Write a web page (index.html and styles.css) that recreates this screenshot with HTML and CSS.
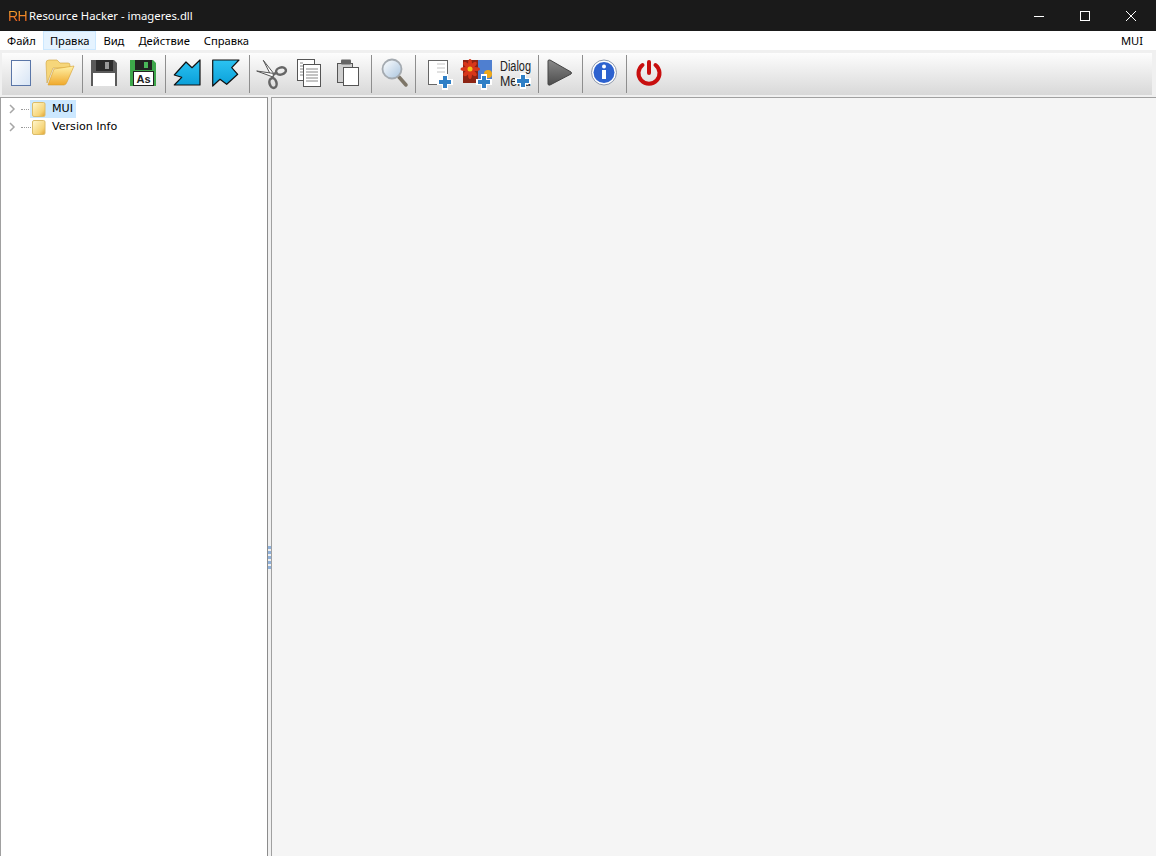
FILE: index.html
```html
<!DOCTYPE html>
<html lang="en">
<head>
    <meta charset="UTF-8">
    <meta name="viewport" content="width=device-width, initial-scale=1.0">
    <title>Resource Hacker - imageres.dll</title>
    <link rel="stylesheet" href="styles.css">
</head>
<body>
    <svg class="defs" width="0" height="0">
        <defs>
            <linearGradient id="paper" x1="0" y1="0" x2="1" y2="1"><stop offset="0" stop-color="#ffffff"/><stop offset="1" stop-color="#d6e4f5"/></linearGradient>
            <linearGradient id="folder" x1="0" y1="0" x2="0" y2="1"><stop offset="0" stop-color="#fff2a8"/><stop offset="1" stop-color="#f0a92c"/></linearGradient>
            <linearGradient id="cyan" x1="0" y1="0" x2="0" y2="1"><stop offset="0" stop-color="#2cc3f2"/><stop offset="1" stop-color="#0a9fd8"/></linearGradient>
            <linearGradient id="play" x1="0" y1="0" x2="0" y2="1"><stop offset="0" stop-color="#8a8a8a"/><stop offset="1" stop-color="#4c4c4c"/></linearGradient>
            <linearGradient id="lens" x1="0" y1="0" x2="1" y2="1"><stop offset="0" stop-color="#ffffff"/><stop offset="1" stop-color="#a9c4de"/></linearGradient>
            <linearGradient id="treefolder" x1="0" y1="0" x2="1" y2="1"><stop offset="0" stop-color="#fff8d0"/><stop offset=".7" stop-color="#f6d476"/><stop offset="1" stop-color="#e0a030"/></linearGradient>
            <g id="plus">
                <path d="M5 0h6v5h5v6h-5v5H5v-5H0V5h5z" fill="#fff"/>
                <path d="M6 2h4v4h4v4h-4v4H6v-4H2V6h4z" fill="#2f7fc6"/>
            </g>
        </defs>
    </svg>

    <header class="titlebar">
        <span class="app-logo">RH</span>
        <span class="app-title">Resource Hacker - imageres.dll</span>
        <div class="window-buttons">
            <span class="win-btn"><svg width="12" height="12" viewBox="0 0 12 12"><path d="M1 6.500h10" stroke="#fff" stroke-width="1"/></svg></span>
            <span class="win-btn"><svg width="12" height="12" viewBox="0 0 12 12"><rect x="1.500" y="1.500" width="9" height="9" fill="none" stroke="#fff"/></svg></span>
            <span class="win-btn"><svg width="12" height="12" viewBox="0 0 12 12"><path d="M1 1l10 10M11 1L1 11" stroke="#fff" stroke-width="1"/></svg></span>
        </div>
    </header>

    <nav class="menubar">
        <span class="menu-item">Файл</span>
        <span class="menu-item active">Правка</span>
        <span class="menu-item">Вид</span>
        <span class="menu-item">Действие</span>
        <span class="menu-item">Справка</span>
        <span class="menu-right">MUI</span>
    </nav>

    <div class="toolbar-wrap">
        <div class="toolbar">
            <span class="tool"><svg width="32" height="32" viewBox="0 0 32 32"><rect x="6.500" y="3.500" width="19" height="25" fill="url(#paper)" stroke="#5a76a8"/></svg></span>
            <span class="tool"><svg width="32" height="32" viewBox="0 0 32 32"><path d="M3 26L2 6q0-3 3-3h8l3 3h8q2 0 2 2v3H9z" fill="#f6d67a" stroke="#d0a23c" stroke-width=".6"/><path d="M4 28L10 12 30 9l-7 16q-1 3-3 3z" fill="url(#folder)" stroke="#d69e2c" stroke-width=".6"/></svg></span>
            <span class="sep"></span>
            <span class="tool"><svg width="32" height="32" viewBox="0 0 32 32"><path d="M3 3h23l3 3v23H3z" fill="#5a5a5a"/><rect x="8" y="3" width="17" height="11" fill="#2c2c2c"/><rect x="17" y="5" width="4" height="7" fill="#9a9a9a"/><rect x="5" y="16" width="22" height="13" fill="#fff"/></svg></span>
            <span class="tool"><svg width="32" height="32" viewBox="0 0 32 32"><path d="M3 3h23l3 3v23H3z" fill="#3da64a"/><rect x="8" y="3" width="17" height="10" fill="#222"/><rect x="17" y="5" width="4" height="6" fill="#49b558"/><rect x="6.500" y="14.500" width="20" height="14" fill="#fff" stroke="#222"/><text class="as-text" x="16.500" y="26" text-anchor="middle">As</text></svg></span>
            <span class="sep"></span>
            <span class="tool"><svg width="32" height="32" viewBox="0 0 32 32"><path d="M29 28H3.300l7.400-7.700L3.300 18 15 5l6 5.700L29 3z" fill="url(#cyan)" stroke="#111" stroke-width="1.200" stroke-linejoin="round"/></svg></span>
            <span class="tool"><svg width="32" height="32" viewBox="0 0 32 32"><path d="M2.700 3H29l-7.300 7.700 6 6.600-11 10-6.700-5L2.700 29z" fill="url(#cyan)" stroke="#111" stroke-width="1.200" stroke-linejoin="round"/></svg></span>
            <span class="sep after-pair"></span>
            <span class="tool"><svg width="32" height="32" viewBox="0 0 32 32"><path d="M8.300 3.300L19.500 17.500 16.500 19.500z" fill="#fff" stroke="#555"/><path d="M1.700 14L19 16.500 18 20z" fill="#fff" stroke="#555"/><path d="M18 18l4-3M17 19l1 2" stroke="#666" stroke-width="2.500"/><ellipse cx="26" cy="14" rx="5" ry="3.500" fill="none" stroke="#666" stroke-width="2.500" transform="rotate(-15 26 14)"/><ellipse cx="18" cy="26" rx="3.500" ry="5" fill="none" stroke="#666" stroke-width="2.500" transform="rotate(-15 18 26)"/></svg></span>
            <span class="tool tight"><svg width="32" height="32" viewBox="0 0 32 32"><rect x="4.500" y="2.500" width="17" height="21" fill="#fff" stroke="#555"/><rect x="10.500" y="7.500" width="17" height="22" fill="#fff" stroke="#555"/><path d="M13 12h12M13 15h12M13 18h12M13 21h12M13 24h12" stroke="#888"/><path d="M7 6h3M7 9h3M7 12h3M7 15h3M7 18h3" stroke="#888"/></svg></span>
            <span class="tool tight"><svg width="32" height="32" viewBox="0 0 32 32"><rect x="6.500" y="6.500" width="15" height="19" fill="#cfcfcf" stroke="#555"/><rect x="10" y="2.500" width="10" height="5" rx="1" fill="#666"/><rect x="12.500" y="10.500" width="15" height="18" fill="#fff" stroke="#555"/></svg></span>
            <span class="sep before-find"></span>
            <span class="tool"><svg width="32" height="32" viewBox="0 0 32 32"><path d="M21 20l7 8" stroke="#7d7567" stroke-width="3.500" stroke-linecap="round"/><circle cx="14" cy="12" r="9.500" fill="url(#lens)" stroke="#a4aab0" stroke-width="1.800"/></svg></span>
            <span class="sep after-find"></span>
            <span class="tool"><svg width="32" height="32" viewBox="0 0 32 32"><rect x="4.500" y="3.500" width="19" height="24" fill="#fff" stroke="#666"/><path d="M13 7h8M13 11h8M13 15h8" stroke="#e2e2e2" stroke-width="2"/><use href="#plus" x="13" y="17"/></svg></span>
            <span class="tool tight"><svg width="32" height="32" viewBox="0 0 32 32"><rect x="1" y="3" width="29" height="23" fill="#4f7fd0"/><rect x="1" y="3" width="15" height="23" fill="#8c2414"/><g fill="#d8361a"><ellipse cx="8" cy="7" rx="2" ry="5"/><ellipse cx="8" cy="17" rx="2" ry="5"/><ellipse cx="3.500" cy="12" rx="5" ry="2"/><ellipse cx="13" cy="12" rx="5" ry="2"/><ellipse cx="4.500" cy="8" rx="2" ry="4" transform="rotate(-45 4.500 8)"/><ellipse cx="11.500" cy="8" rx="2" ry="4" transform="rotate(45 11.500 8)"/><ellipse cx="4.500" cy="16" rx="2" ry="4" transform="rotate(45 4.500 16)"/><ellipse cx="11.500" cy="16" rx="2" ry="4" transform="rotate(-45 11.500 16)"/></g><circle cx="8" cy="12" r="2.500" fill="#f2c21c"/><circle cx="26" cy="17" r="4" fill="#efa818"/><use href="#plus" x="14" y="17"/></svg></span>
            <span class="tool tight"><svg width="32" height="32" viewBox="0 0 32 32"><text class="dlg-text" x="0" y="14" textLength="31" lengthAdjust="spacingAndGlyphs">Dialog</text><text class="dlg-text" x="0" y="29" textLength="31" lengthAdjust="spacingAndGlyphs">Menu</text><use href="#plus" x="15" y="16"/></svg></span>
            <span class="sep"></span>
            <span class="tool"><svg width="32" height="32" viewBox="0 0 32 32"><path d="M4 4q0-1.500 2-1l21 12q1 1 0 2L6 28q-2 .5-2-1z" fill="url(#play)" stroke="#444"/></svg></span>
            <span class="sep"></span>
            <span class="tool"><svg width="32" height="32" viewBox="0 0 32 32"><circle cx="16" cy="15.500" r="12.500" fill="#fff" stroke="#8d98ac"/><circle cx="16" cy="15.500" r="10.500" fill="#2d62cf"/><circle cx="16" cy="9.500" r="2" fill="#fff"/><path d="M14 13h4v9h-4z" fill="#fff"/></svg></span>
            <span class="sep"></span>
            <span class="tool"><svg width="32" height="32" viewBox="0 0 32 32"><path d="M10.500 8a10.500 10.500 0 1 0 13 0" fill="none" stroke="#c80f0f" stroke-width="4" stroke-linecap="round"/><path d="M17 5v11" stroke="#c80f0f" stroke-width="4" stroke-linecap="round"/></svg></span>
        </div>
    </div>

    <main class="panes">
        <section class="tree-pane">
            <div class="tree-row">
                <svg class="chevron" width="8" height="10" viewBox="0 0 8 10"><path d="M2 1l4 4-4 4" fill="none" stroke="#a6a6a6" stroke-width="1.500"/></svg>
                <span class="tree-dots"></span>
                <svg class="tree-folder" width="15" height="17" viewBox="0 0 15 17"><rect x=".5" y="1.500" width="12.500" height="14" rx="1.500" fill="url(#treefolder)" stroke="#dcbc68"/></svg>
                <span class="tree-label selected">MUI</span>
            </div>
            <div class="tree-row">
                <svg class="chevron" width="8" height="10" viewBox="0 0 8 10"><path d="M2 1l4 4-4 4" fill="none" stroke="#a6a6a6" stroke-width="1.500"/></svg>
                <span class="tree-dots"></span>
                <svg class="tree-folder" width="15" height="17" viewBox="0 0 15 17"><rect x=".5" y="1.500" width="12.500" height="14" rx="1.500" fill="url(#treefolder)" stroke="#dcbc68"/></svg>
                <span class="tree-label">Version Info</span>
            </div>
        </section>
        <div class="splitter">
            <span class="grip"></span>
            <span class="grip"></span>
            <span class="grip"></span>
            <span class="grip"></span>
            <span class="grip"></span>
        </div>
        <section class="editor-pane"></section>
    </main>
</body>
</html>
```

FILE: styles.css
```css
html, body {
    height: 100%;
}
body {
    margin: 0;
    display: flex;
    flex-direction: column;
    overflow: hidden;
    background: #f0f0f0;
    font-family: "Noto Sans", "Open Sans", sans-serif;
    font-size: 11.2px;
    color: #000;
}
.defs {
    position: absolute;
}

.titlebar {
    height: 31px;
    flex: none;
    display: flex;
    align-items: center;
    padding: 0 2px 0 8px;
    background: #1a1a1a;
    color: #fff;
}
.app-logo {
    width: 21px;
    font-family: "Liberation Sans Narrow", "Liberation Sans", sans-serif;
    font-size: 14px;
    letter-spacing: -0.5px;
    background: linear-gradient(#f7b733, #e8501c);
    -webkit-background-clip: text;
    background-clip: text;
    color: transparent;
}
.app-title {
    font-size: 11.3px;
}
.window-buttons {
    display: flex;
    margin-left: auto;
}
.win-btn {
    width: 46px;
    height: 31px;
    display: flex;
    align-items: center;
    justify-content: center;
}

.menubar {
    height: 19px;
    flex: none;
    display: flex;
    align-items: center;
    background: #fff;
}
.menu-item {
    height: 19px;
    line-height: 19px;
    padding: 0 7px;
    box-sizing: border-box;
}
.menu-item.active {
    background: #e5f3ff;
    border: 1px solid #cce8ff;
    line-height: 17px;
    padding: 0 6px;
}
.menu-right {
    margin-left: auto;
    padding-right: 13px;
}

.toolbar-wrap {
    flex: none;
    padding: 3px 4px 2px 2px;
}
.toolbar {
    height: 42px;
    display: flex;
    align-items: center;
    background: linear-gradient(#fdfdfd, #d8d8d8);
}
.tool {
    width: 38px;
    height: 42px;
    display: flex;
    align-items: center;
    justify-content: center;
}
.tool + .tool {
    margin-left: 1px;
}
.tool + .tool.tight {
    margin-left: 0;
}
.tool svg {
    margin-top: -3px;
    overflow: visible;
}
.sep {
    width: 1px;
    height: 38px;
    margin: 0 2px 0 3px;
    background: #8e8e8e;
}
.sep.after-pair {
    margin-left: 4px;
}
.sep.before-find {
    margin: 0 3px 0 5px;
}
.sep.after-find {
    margin: 0 5px 0 2px;
}
.as-text {
    font-family: "Liberation Sans", sans-serif;
    font-size: 11px;
    font-weight: bold;
    fill: #222;
}
.dlg-text {
    font-family: "Liberation Sans", sans-serif;
    font-size: 14px;
    fill: #222;
}

.panes {
    flex: 1;
    display: flex;
    min-height: 0;
}
.tree-pane {
    width: 266px;
    flex: none;
    padding-top: 2px;
    background: #fff;
    border-top: 1px solid #a0a0a0;
    border-left: 1px solid #a0a0a0;
    border-right: 1px solid #8c8c8c;
}
.tree-row {
    height: 18px;
    display: flex;
    align-items: center;
    font-family: "DejaVu Sans", sans-serif;
    font-size: 11.1px;
}
.chevron {
    margin-left: 7px;
}
.tree-dots {
    width: 10px;
    margin-left: 5px;
    border-top: 1px dotted #9a9a9a;
}
.tree-folder {
    position: relative;
    z-index: 1;
    margin-left: 1px;
}
.tree-label {
    height: 18px;
    line-height: 18px;
    padding: 0 3px 0 5px;
}
.tree-label.selected {
    margin-left: -17px;
    padding-left: 22px;
    background: #cce8ff;
}
.splitter {
    width: 3px;
    flex: none;
    display: flex;
    flex-direction: column;
    gap: 2px;
    padding-top: 449px;
    box-sizing: border-box;
    background: #f0f0f0;
}
.grip {
    height: 3px;
    background: #8fb0d8;
}
.editor-pane {
    flex: 1;
    background: #f5f5f5;
    border-top: 1px solid #a0a0a0;
    border-left: 1px solid #a0a0a0;
}
```
